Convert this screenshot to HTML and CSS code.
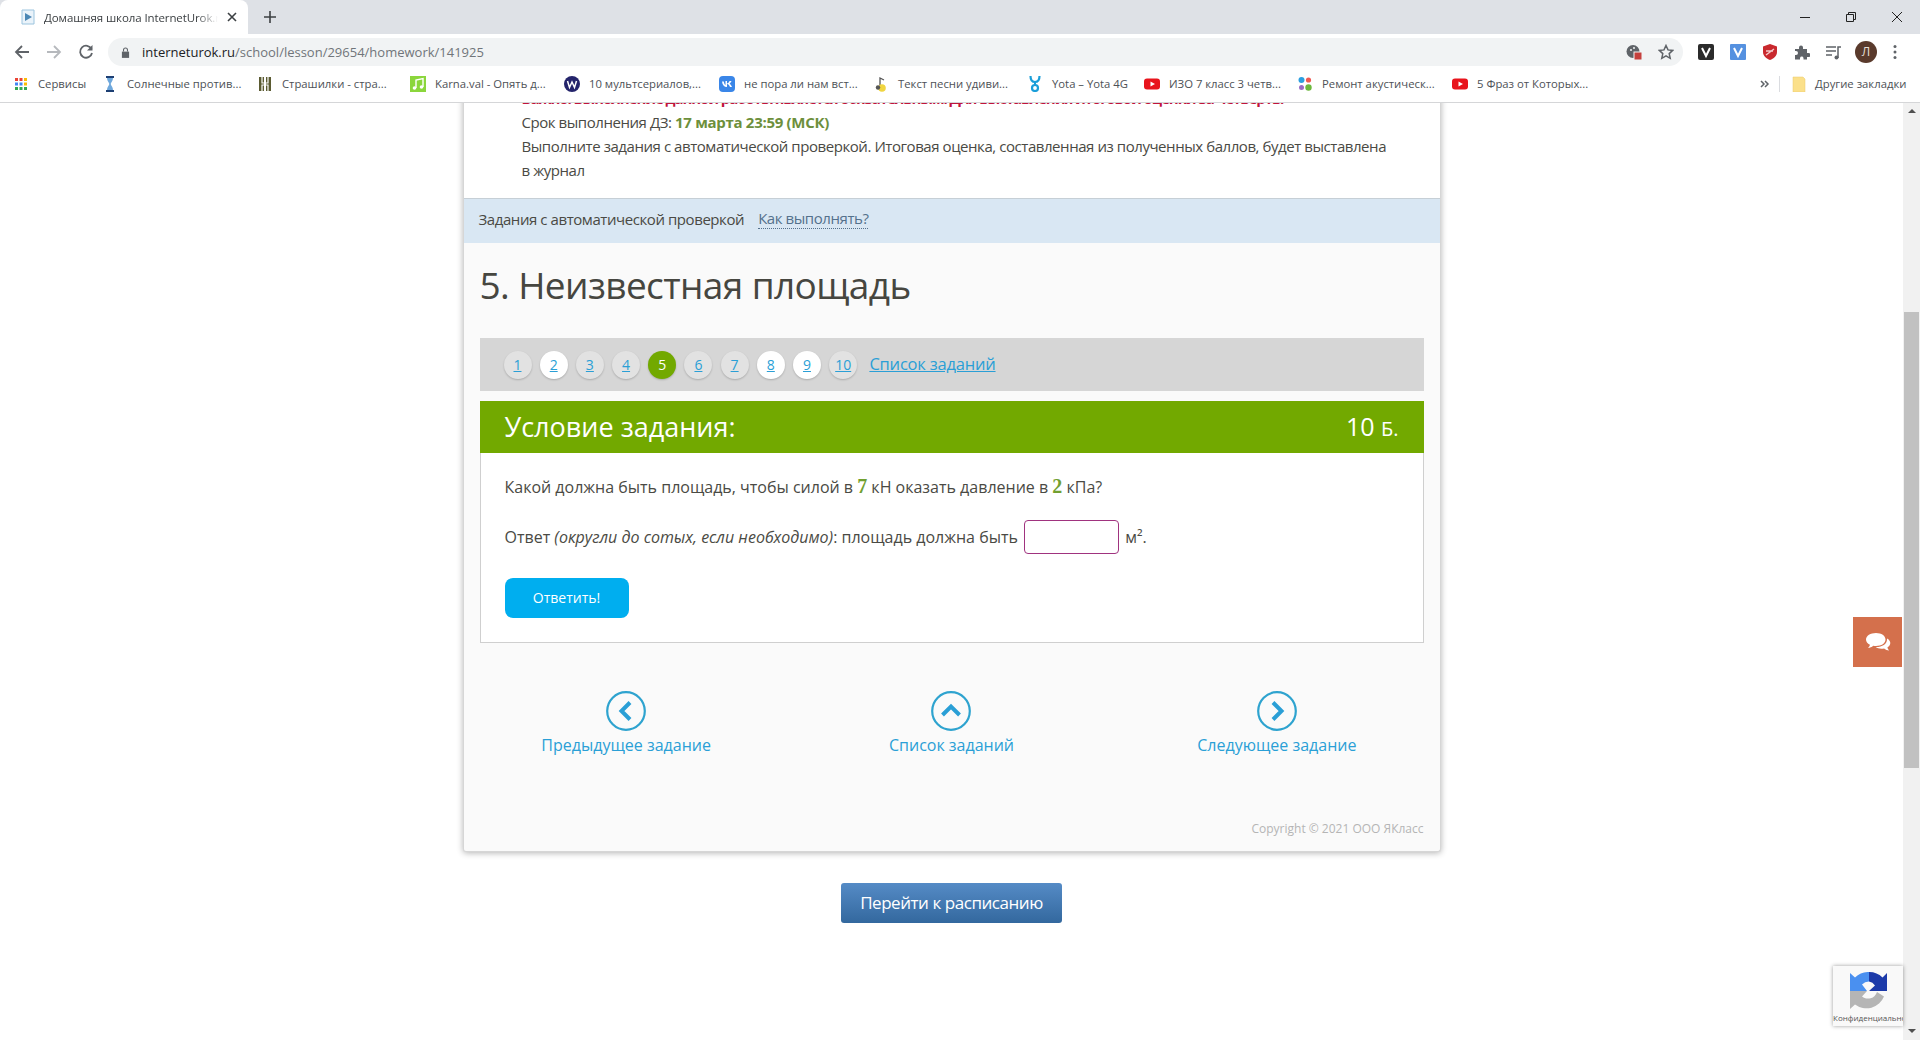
FILE: index.html
```html
<!DOCTYPE html>
<html lang="ru">
<head>
    <meta charset="UTF-8">
    <title>Домашняя школа InternetUrok.ru</title>
    <link rel="stylesheet" href="styles.css">
</head>
<body>
    <div class="tabstrip">
        <div class="tab">
            <svg class="favicon" viewBox="0 0 16 16"><path d="M2 1h12v14H2z" fill="#eaf3fa" stroke="#9cc4de"/><path d="M5 4l7 4-7 4z" fill="#4b87b5"/></svg>
            <span class="tab-title">Домашняя школа InternetUrok.r</span>
            <svg class="tab-close" viewBox="0 0 10 10"><path d="M1 1l8 8M9 1l-8 8" stroke="#3c4043" stroke-width="1.6"/></svg>
        </div>
        <svg class="tab-new" viewBox="0 0 12 12"><path d="M6 0v12M0 6h12" stroke="#3c4043" stroke-width="1.6"/></svg>
        <div class="window-controls">
            <svg viewBox="0 0 12 12"><path d="M1 6.5h10" stroke="#222" stroke-width="1"/></svg>
            <svg viewBox="0 0 12 12"><path d="M1.5 3.5h7v7h-7zM3.5 3.5v-2h7v7h-2" fill="none" stroke="#222" stroke-width="1"/></svg>
            <svg viewBox="0 0 12 12"><path d="M1 1l10 10M11 1L1 11" stroke="#222" stroke-width="1"/></svg>
        </div>
    </div>

    <div class="toolbar">
        <div class="nav-buttons">
            <svg viewBox="0 0 16 16"><path d="M15 8H2M8 2L2 8l6 6" fill="none" stroke="#5f6368" stroke-width="1.8"/></svg>
            <svg viewBox="0 0 16 16"><path d="M1 8h13M8 2l6 6-6 6" fill="none" stroke="#b6b9bd" stroke-width="1.8"/></svg>
            <svg viewBox="0 0 16 16"><path d="M13.5 5A6 6 0 1 0 14 9" fill="none" stroke="#5f6368" stroke-width="1.8"/><path d="M14.5 1v5.5H9z" fill="#5f6368"/></svg>
        </div>
        <div class="address">
            <svg class="lock" viewBox="0 0 10 12"><path d="M1 5h8v7H1z" fill="#5f6368"/><path d="M2.8 5V3.2a2.2 2.2 0 0 1 4.4 0V5" fill="none" stroke="#5f6368" stroke-width="1.2"/></svg>
            <span class="url"><b>interneturok.ru</b>/school/lesson/29654/homework/141925</span>
            <svg class="addr-icon cookie" viewBox="0 0 16 16"><circle cx="7" cy="7.5" r="6.5" fill="#5f6368"/><circle cx="5" cy="6" r="1" fill="#f1f3f4"/><circle cx="8" cy="4" r="1" fill="#f1f3f4"/><rect x="8" y="8" width="8" height="8" fill="#c5403d" stroke="#f1f3f4"/></svg>
            <svg class="addr-icon star" viewBox="0 0 16 16"><path d="M8 1.5l2 4.4 4.7.5-3.5 3.2 1 4.7L8 11.900l-4.200 2.400 1-4.700L1.300 6.400 6 5.900z" fill="none" stroke="#5f6368" stroke-width="1.500"/></svg>
        </div>
        <div class="extensions">
            <svg viewBox="0 0 16 16"><rect width="16" height="16" rx="2" fill="#2b2b2b"/><path d="M4 4l4 8 4-8" fill="none" stroke="#fff" stroke-width="2"/></svg>
            <svg viewBox="0 0 16 16"><rect width="16" height="16" rx="1" fill="#5591e0"/><path d="M4 4l4 8 4-8" fill="none" stroke="#fff" stroke-width="2"/></svg>
            <svg viewBox="0 0 16 16"><path d="M8 0l7 2.500V8c0 4-3.500 6.800-7 8-3.500-1.200-7-4-7-8V2.500z" fill="#c9292e"/><path d="M4 11l8-6M4 7h7" stroke="#f5c9c9" stroke-width="1.500"/></svg>
            <svg viewBox="0 0 16 16"><path d="M1 5h4V3.500a2 2 0 0 1 4 0V5h4v4h1.500a2 2 0 0 1 0 4H13v2.500H9.500V14a1.800 1.800 0 0 0-3.500 0v1.500H1V11h1a2 2 0 0 0 0-4H1z" fill="#5f6368"/></svg>
            <svg viewBox="0 0 16 16"><path d="M0 3h10M0 7h10M0 11h6" stroke="#5f6368" stroke-width="1.500"/><path d="M12 14V3h3" fill="none" stroke="#5f6368" stroke-width="1.500"/><circle cx="10.500" cy="13.500" r="2" fill="#5f6368"/></svg>
            <span class="avatar">Л</span>
            <svg class="menu-dots" viewBox="0 0 4 16"><circle cx="2" cy="2.500" r="1.500" fill="#5f6368"/><circle cx="2" cy="8" r="1.500" fill="#5f6368"/><circle cx="2" cy="13.500" r="1.500" fill="#5f6368"/></svg>
        </div>
    </div>

    <div class="bookmarks">
        <a class="bm">
            <svg viewBox="0 0 16 16"><g fill="#ea4335"><rect x="2" y="2" width="3" height="3"/><rect x="6.500" y="2" width="3" height="3"/></g><rect x="11" y="2" width="3" height="3" fill="#fbbc05"/><g fill="#4285f4"><rect x="2" y="6.500" width="3" height="3"/><rect x="6.500" y="6.500" width="3" height="3"/></g><rect x="11" y="6.500" width="3" height="3" fill="#fbbc05"/><g fill="#34a853"><rect x="2" y="11" width="3" height="3"/><rect x="6.500" y="11" width="3" height="3"/><rect x="11" y="11" width="3" height="3"/></g></svg>
            <span>Сервисы</span>
        </a>
        <a class="bm">
            <svg viewBox="0 0 16 16"><path d="M4 1h8M4 15h8" stroke="#1d3f73" stroke-width="2"/><path d="M5 2h6c0 3-2 4.500-2.300 6 .3 1.500 2.300 3 2.300 6H5c0-3 2-4.500 2.300-6C7 6.500 5 5 5 2z" fill="#6fa8dc"/></svg>
            <span>Солнечные против...</span>
        </a>
        <a class="bm">
            <svg viewBox="0 0 16 16"><path d="M2 1h5v14H2zM9 1h5v14H9z" fill="#5b5b32"/><path d="M5 1v6h6V1M5 15V9h6v6" fill="none" stroke="#fff" stroke-width="1.200"/></svg>
            <span>Страшилки - стра...</span>
        </a>
        <a class="bm">
            <svg viewBox="0 0 16 16"><rect width="16" height="16" fill="#8bd63c"/><path d="M6 12V4l7-1.500V11" fill="none" stroke="#fff" stroke-width="1.400"/><circle cx="4.500" cy="12" r="1.800" fill="#fff"/><circle cx="11.500" cy="11" r="1.800" fill="#fff"/></svg>
            <span>Karna.val - Опять д...</span>
        </a>
        <a class="bm">
            <svg viewBox="0 0 16 16"><circle cx="8" cy="8" r="8" fill="#24246b"/><path d="M3.500 5l2 6.500L8 6l2.500 5.500 2-6.500" fill="none" stroke="#fff" stroke-width="1.500"/></svg>
            <span>10 мультсериалов,...</span>
        </a>
        <a class="bm">
            <svg viewBox="0 0 16 16"><rect width="16" height="16" rx="4" fill="#3a86e8"/><path d="M3 5.500c.3 3.500 2 5.500 5 5.500V8c1.200 0 2.300 1.300 3 3h2c-.7-2-2-3-2.500-3.300.7-.5 1.700-1.700 2-2.700h-2c-.5 1.300-1.500 2.300-2.500 2.500V5H6.500v4C5.600 8.500 5 7 4.800 5.500z" fill="#fff"/></svg>
            <span>не пора ли нам вст...</span>
        </a>
        <a class="bm">
            <svg viewBox="0 0 16 16"><path d="M7 11V2l4 2" fill="none" stroke="#555" stroke-width="1.300"/><circle cx="9" cy="12" r="3.800" fill="#f0d540"/><circle cx="5" cy="11.500" r="2.200" fill="#555"/></svg>
            <span>Текст песни удиви...</span>
        </a>
        <a class="bm">
            <svg viewBox="0 0 16 16"><path d="M3.500 0c0 4.500 2.500 6 4.500 6s4.500-1.500 4.500-6" fill="none" stroke="#1a9ed9" stroke-width="2.200"/><path d="M8 6v3" stroke="#1a9ed9" stroke-width="2"/><circle cx="8" cy="12" r="3" fill="none" stroke="#1a9ed9" stroke-width="2.200"/></svg>
            <span>Yota – Yota 4G</span>
        </a>
        <a class="bm">
            <svg viewBox="0 0 16 16"><rect y="2.500" width="16" height="11" rx="3" fill="#e8141c"/><path d="M6.500 5.500L11 8l-4.500 2.500z" fill="#fff"/></svg>
            <span>ИЗО 7 класс 3 четв...</span>
        </a>
        <a class="bm">
            <svg viewBox="0 0 16 16"><circle cx="4.500" cy="4" r="3" fill="#2c9fe0"/><circle cx="11.500" cy="4" r="2.600" fill="#ef5a52"/><circle cx="4.500" cy="11.500" r="2.500" fill="#9a6cc4"/><circle cx="11.500" cy="11.500" r="3.200" fill="#6cb83c"/></svg>
            <span>Ремонт акустическ...</span>
        </a>
        <a class="bm">
            <svg viewBox="0 0 16 16"><rect y="2.500" width="16" height="11" rx="3" fill="#e8141c"/><path d="M6.500 5.500L11 8l-4.500 2.500z" fill="#fff"/></svg>
            <span>5 Фраз от Которых...</span>
        </a>
        <div class="bm-end">
            <svg class="bm-more" viewBox="0 0 10 10"><path d="M1 2l3 3-3 3M5 2l3 3-3 3" fill="none" stroke="#5f6368" stroke-width="1.500"/></svg>
            <i class="bm-sep"></i>
            <svg class="bm-folder" viewBox="0 0 14 16"><path d="M1 1h10l2 2v13H1z" fill="#fbe08a" stroke="#e8ca6a" stroke-width=".5"/></svg>
            <span>Другие закладки</span>
        </div>
    </div>

    <div class="viewport">
        <main class="page">
            <div class="card">
                <div class="intro">
                    <p class="intro-alert">Важно! Выполнение данной работы является обязательным! Для выставления итоговой оценки за четверть.</p>
                    <p>Срок выполнения ДЗ: <b class="deadline">17 марта 23:59 (МСК)</b></p>
                    <p>Выполните задания с автоматической проверкой. Итоговая оценка, составленная из полученных баллов, будет выставлена в журнал</p>
                </div>
                <div class="hint-band">
                    <span>Задания с автоматической проверкой</span>
                    <a class="hint-link">Как выполнять?</a>
                </div>
                <div class="task">
                    <h1>5. Неизвестная площадь</h1>
                    <div class="steps">
                        <a class="step">1</a>
                        <a class="step done">2</a>
                        <a class="step">3</a>
                        <a class="step">4</a>
                        <a class="step current">5</a>
                        <a class="step">6</a>
                        <a class="step">7</a>
                        <a class="step done">8</a>
                        <a class="step done">9</a>
                        <a class="step">10</a>
                        <a class="steps-list">Список заданий</a>
                    </div>
                    <div class="task-head">
                        <span>Условие задания:</span>
                        <span class="points">10 <small>Б.</small></span>
                    </div>
                    <div class="task-body">
                        <p class="question">Какой должна быть площадь, чтобы силой в <b class="num">7</b> кН оказать давление в <b class="num">2</b> кПа?</p>
                        <p class="answer">Ответ <i>(округли до сотых, если необходимо)</i>: площадь должна быть <input class="answer-input" type="text"> м².</p>
                        <button class="answer-btn" type="button">Ответить!</button>
                    </div>
                    <div class="task-nav">
                        <a>
                            <svg viewBox="0 0 40 40"><circle cx="20" cy="20" r="18.800" fill="none" stroke="#2ea3cf" stroke-width="2.200"/><path d="M24 11.500L15.500 20l8.500 8.500" fill="none" stroke="#2a9fd6" stroke-width="4"/></svg>
                            Предыдущее задание
                        </a>
                        <a>
                            <svg viewBox="0 0 40 40"><circle cx="20" cy="20" r="18.800" fill="none" stroke="#2ea3cf" stroke-width="2.200"/><path d="M11.500 24l8.500-8.500 8.500 8.500" fill="none" stroke="#2a9fd6" stroke-width="4"/></svg>
                            Список заданий
                        </a>
                        <a>
                            <svg viewBox="0 0 40 40"><circle cx="20" cy="20" r="18.800" fill="none" stroke="#2ea3cf" stroke-width="2.200"/><path d="M16 11.500l8.500 8.500-8.500 8.500" fill="none" stroke="#2a9fd6" stroke-width="4"/></svg>
                            Следующее задание
                        </a>
                    </div>
                    <div class="copyright">Copyright © 2021 ООО ЯКласс</div>
                </div>
            </div>
            <div class="schedule">
                <button class="schedule-btn" type="button">Перейти к расписанию</button>
            </div>
        </main>
        <div class="scrollbar">
            <i class="arrow-up"></i>
            <i class="thumb"></i>
            <i class="arrow-down"></i>
        </div>

        <div class="chat-btn">
            <svg viewBox="0 0 26 20"><path d="M11 1c5.500 0 9.500 2.800 9.500 6.500S16.500 14 11 14c-1 0-2-.1-2.800-.3C6.800 15 5 15.800 3 16c1-.9 1.700-2 1.900-3.200C2.400 11.600 1 9.700 1 7.500 1 3.800 5.500 1 11 1z" fill="#fff"/><path d="M22 6.500c2 1 3.300 2.700 3.300 4.600 0 1.800-1.100 3.400-2.900 4.500.2 1 .8 2.100 1.700 2.900-1.900-.2-3.600-.9-5-2.100-.9.200-1.800.300-2.700.300-2.200 0-4.200-.6-5.700-1.600 5.800.2 11.800-2.800 11.300-8.600z" fill="#fff"/></svg>
        </div>

        <div class="recaptcha">
            <svg viewBox="0 0 38 38">
                <path d="M0 19V1l5 4.500A19 19 0 0 1 19 0v9.500a9.500 9.500 0 0 0-7 3l5 6.500z" fill="#4a90f0"/>
                <path d="M19 0a19 19 0 0 1 13.500 5.500L37 1v18H19l6-5.500a9 9 0 0 0-6-4z" fill="#1c3aa9"/>
                <path d="M0 19v18l5-4.500A19 19 0 0 0 34 24.500L27 20a9.500 9.500 0 0 1-15 4.500l5-5.500z" fill="#b5b5b5"/>
            </svg>
            <span>Конфиденциальность</span>
        </div>
    </div>
</body>
</html>
```
FILE: styles.css
```css
:root {
    --strip-color: #dee1e6;
    --chrome-text: #3c4043;
    --green: #72a900;
    --link-color: #2a9fd6;
    --text-color: #4a4a44;
}

* {
    box-sizing: border-box;
}

body {
    margin: 0;
    height: 1040px;
    overflow: hidden;
    display: flex;
    flex-direction: column;
    background-color: #fff;
    font-family: 'Open Sans', sans-serif;
    color: var(--text-color);
}

p {
    margin: 0;
}

/* browser chrome */
.tabstrip {
    height: 34px;
    flex: none;
    display: flex;
    align-items: center;
    background-color: var(--strip-color);
}

.tab {
    width: 248px;
    height: 34px;
    display: flex;
    align-items: center;
    padding-left: 20px;
    background-color: #fff;
    border-radius: 8px 8px 0 0;
}

.favicon {
    width: 16px;
    height: 16px;
    flex: none;
}

.tab-title {
    width: 174px;
    margin-left: 8px;
    overflow: hidden;
    white-space: nowrap;
    font-size: 11.5px;
    letter-spacing: -0.1px;
    color: var(--chrome-text);
    -webkit-mask-image: linear-gradient(to right, #000 88%, transparent);
    mask-image: linear-gradient(to right, #000 88%, transparent);
}

.tab-close {
    width: 10px;
    height: 10px;
    margin-left: 9px;
}

.tab-new {
    width: 12px;
    height: 12px;
    margin-left: 16px;
}

.window-controls {
    margin-left: auto;
    display: flex;
    gap: 34px;
    padding-right: 17px;
}

.window-controls svg {
    width: 12px;
    height: 12px;
}

.toolbar {
    height: 32px;
    flex: none;
    display: flex;
    align-items: flex-end;
    background-color: #fff;
}

.nav-buttons {
    width: 108px;
    height: 28px;
    display: flex;
    align-items: center;
    gap: 16px;
    padding-left: 14px;
}

.nav-buttons svg {
    width: 16px;
    height: 16px;
}

.address {
    width: 1575px;
    height: 28px;
    display: flex;
    align-items: center;
    padding: 0 9px 0 13px;
    background-color: #f1f3f4;
    border-radius: 14px;
}

.lock {
    width: 9px;
    height: 11px;
}

.url {
    margin-left: 12px;
    font-size: 13px;
    color: #70757a;
}

.url b {
    font-weight: 400;
    color: #202124;
}

.addr-icon {
    width: 16px;
    height: 16px;
}

.cookie {
    margin-left: auto;
}

.star {
    margin-left: 16px;
}

.extensions {
    height: 28px;
    flex: 1;
    display: flex;
    align-items: center;
    gap: 16px;
    padding-left: 15px;
}

.extensions svg {
    width: 16px;
    height: 16px;
    flex: none;
}

.avatar {
    width: 22px;
    height: 22px;
    flex: none;
    margin: 0 -3px;
    border-radius: 50%;
    background-color: #5a3a2c;
    color: #e8e0da;
    font-size: 12px;
    line-height: 22px;
    text-align: center;
}

.extensions .menu-dots {
    width: 4px;
    margin-left: 3px;
}

.bookmarks {
    height: 37px;
    flex: none;
    display: grid;
    grid-template-columns: 89px 155px 153px 154px 155px 154px 154px 117px 153px 155px 300px 1fr;
    align-items: center;
    padding: 0 0 1px 13px;
    background-color: #fff;
    border-bottom: 1px solid #d5d6d8;
    font-size: 11.3px;
    color: #4d5156;
}

.bm {
    display: flex;
    align-items: center;
    gap: 9px;
    white-space: nowrap;
}

.bm svg {
    width: 16px;
    height: 16px;
    flex: none;
}

.bm-end {
    display: flex;
    align-items: center;
    white-space: nowrap;
}

.bm-more {
    width: 10px;
    height: 10px;
    margin-left: 8px;
}

.bm-sep {
    width: 1px;
    height: 16px;
    margin-left: 9px;
    background-color: #dadce0;
}

.bm-folder {
    width: 14px;
    height: 16px;
    margin-left: 12px;
}

.bm-end span {
    margin-left: 9px;
}

/* page */
.viewport {
    flex: 1;
    display: flex;
    position: relative;
    min-height: 0;
}

.page {
    flex: 1;
    overflow: hidden;
}

.card {
    width: 978px;
    margin: -17px auto 0;
    background-color: #fafafa;
    border: 1px solid #d6d6d6;
    border-top: 0;
    border-radius: 0 0 3px 3px;
    box-shadow: 0 1px 6px rgba(0, 0, 0, 0.3);
}

.intro {
    padding: 0 52px 16px 58px;
    background-color: #fff;
    font-size: 15px;
    letter-spacing: -0.44px;
    line-height: 24px;
}

.intro-alert {
    color: #c0143c;
    font-weight: 700;
    letter-spacing: -1.08px;
    white-space: nowrap;
}

.deadline {
    color: #6d8f3c;
    letter-spacing: -0.3px;
}

.hint-band {
    height: 45px;
    display: flex;
    align-items: center;
    gap: 14px;
    padding: 0 0 5px 15px;
    background-color: #d9e7f3;
    border-top: 1px solid #c6cfd6;
    font-size: 15px;
    letter-spacing: -0.43px;
}

.hint-link {
    color: #54718c;
    border-bottom: 1px dotted #54718c;
}

.task {
    padding: 0 16px;
}

h1 {
    margin: 0;
    padding-top: 14px;
    height: 95px;
    font-size: 37px;
    font-weight: 400;
    letter-spacing: -0.6px;
    line-height: 56px;
    color: #464640;
}

.steps {
    height: 53px;
    display: flex;
    align-items: center;
    gap: 8.2px;
    padding-left: 24px;
    background-color: #d6d6d6;
}

.step {
    width: 28px;
    height: 28px;
    border-radius: 50%;
    background-color: #e2e2e2;
    box-shadow: 0 1px 2px rgba(0, 0, 0, 0.2);
    color: var(--link-color);
    font-size: 14px;
    line-height: 28px;
    text-align: center;
    text-decoration: underline;
}

.step.done {
    background-color: #fff;
}

.step.current {
    background-color: var(--green);
    color: #fff;
    text-decoration: none;
}

.steps-list {
    margin: 0 0 2px 4px;
    color: var(--link-color);
    font-size: 16.5px;
    letter-spacing: -0.2px;
    text-decoration: underline;
}

.task-head {
    height: 52px;
    margin-top: 10px;
    display: flex;
    align-items: center;
    justify-content: space-between;
    padding: 0 25px 2px;
    background-color: var(--green);
    color: #fff;
    font-size: 27px;
}

.points {
    font-size: 25px;
}

.points small {
    font-size: 20px;
}

.task-body {
    height: 190px;
    padding: 20px 24px 0;
    background-color: #fff;
    border: 1px solid #cfcfcf;
    border-top: 0;
    font-size: 16px;
}

.question {
    line-height: 26px;
}

.num {
    font-family: 'Liberation Serif', serif;
    font-size: 20px;
    color: #72a030;
}

.answer {
    margin-top: 20px;
    line-height: 34px;
    display: flex;
    align-items: center;
    white-space: pre;
}

.answer-input {
    width: 95px;
    height: 34px;
    margin: 0 2px 0 2px;
    background-color: #fff;
    border: 1px solid #a0337f;
    border-radius: 4px;
}

.answer-btn {
    display: block;
    width: 124px;
    height: 40px;
    margin-top: 24px;
    padding-bottom: 3px;
    background-color: #00aeef;
    border: 0;
    border-radius: 8px;
    color: #fff;
    font-family: 'Open Sans', sans-serif;
    font-size: 14px;
}

.task-nav {
    margin: 48px -16px 0;
    display: grid;
    grid-template-columns: repeat(3, 1fr);
    text-align: center;
    color: var(--link-color);
    font-size: 16px;
}

.task-nav a {
    display: flex;
    flex-direction: column;
    align-items: center;
    gap: 3px;
}

.task-nav svg {
    width: 40px;
    height: 40px;
}

.copyright {
    margin-top: 64px;
    padding-bottom: 14px;
    text-align: right;
    font-size: 12px;
    color: #b5b5b5;
}

.schedule {
    margin-top: 31px;
    display: flex;
    justify-content: center;
}

.schedule-btn {
    width: 221px;
    height: 40px;
    padding-bottom: 2px;
    background: linear-gradient(#558bc6, #33689e);
    border: 0;
    border-radius: 3px;
    color: #fff;
    font-family: 'Open Sans', sans-serif;
    font-size: 17px;
    letter-spacing: -0.45px;
}

/* scrollbar and things over the page */
.scrollbar {
    width: 17px;
    flex: none;
    display: flex;
    flex-direction: column;
    align-items: center;
    background-color: #f1f1f1;
}

.arrow-up {
    margin-top: 6px;
    border: 4px solid transparent;
    border-top: 0;
    border-bottom: 4px solid #505050;
}

.thumb {
    width: 15px;
    height: 456px;
    margin-top: 199px;
    background-color: #c1c1c1;
}

.arrow-down {
    margin-top: auto;
    margin-bottom: 7px;
    border: 4px solid transparent;
    border-bottom: 0;
    border-top: 4px solid #505050;
}

.chat-btn {
    position: absolute;
    left: 1853px;
    top: 514px;
    width: 49px;
    height: 50px;
    display: flex;
    align-items: center;
    justify-content: center;
    background-color: #d4704c;
}

.chat-btn svg {
    width: 26px;
    height: 20px;
}

.recaptcha {
    position: absolute;
    left: 1833px;
    top: 863px;
    width: 70px;
    height: 60px;
    overflow: hidden;
    background-color: #f9f9f9;
    box-shadow: 0 0 4px rgba(0, 0, 0, 0.4);
}

.recaptcha svg {
    display: block;
    width: 38px;
    height: 38px;
    margin: 6px 0 0 17px;
}

.recaptcha span {
    display: block;
    margin-top: 2px;
    font-size: 8px;
    white-space: nowrap;
    color: #555;
}
```
